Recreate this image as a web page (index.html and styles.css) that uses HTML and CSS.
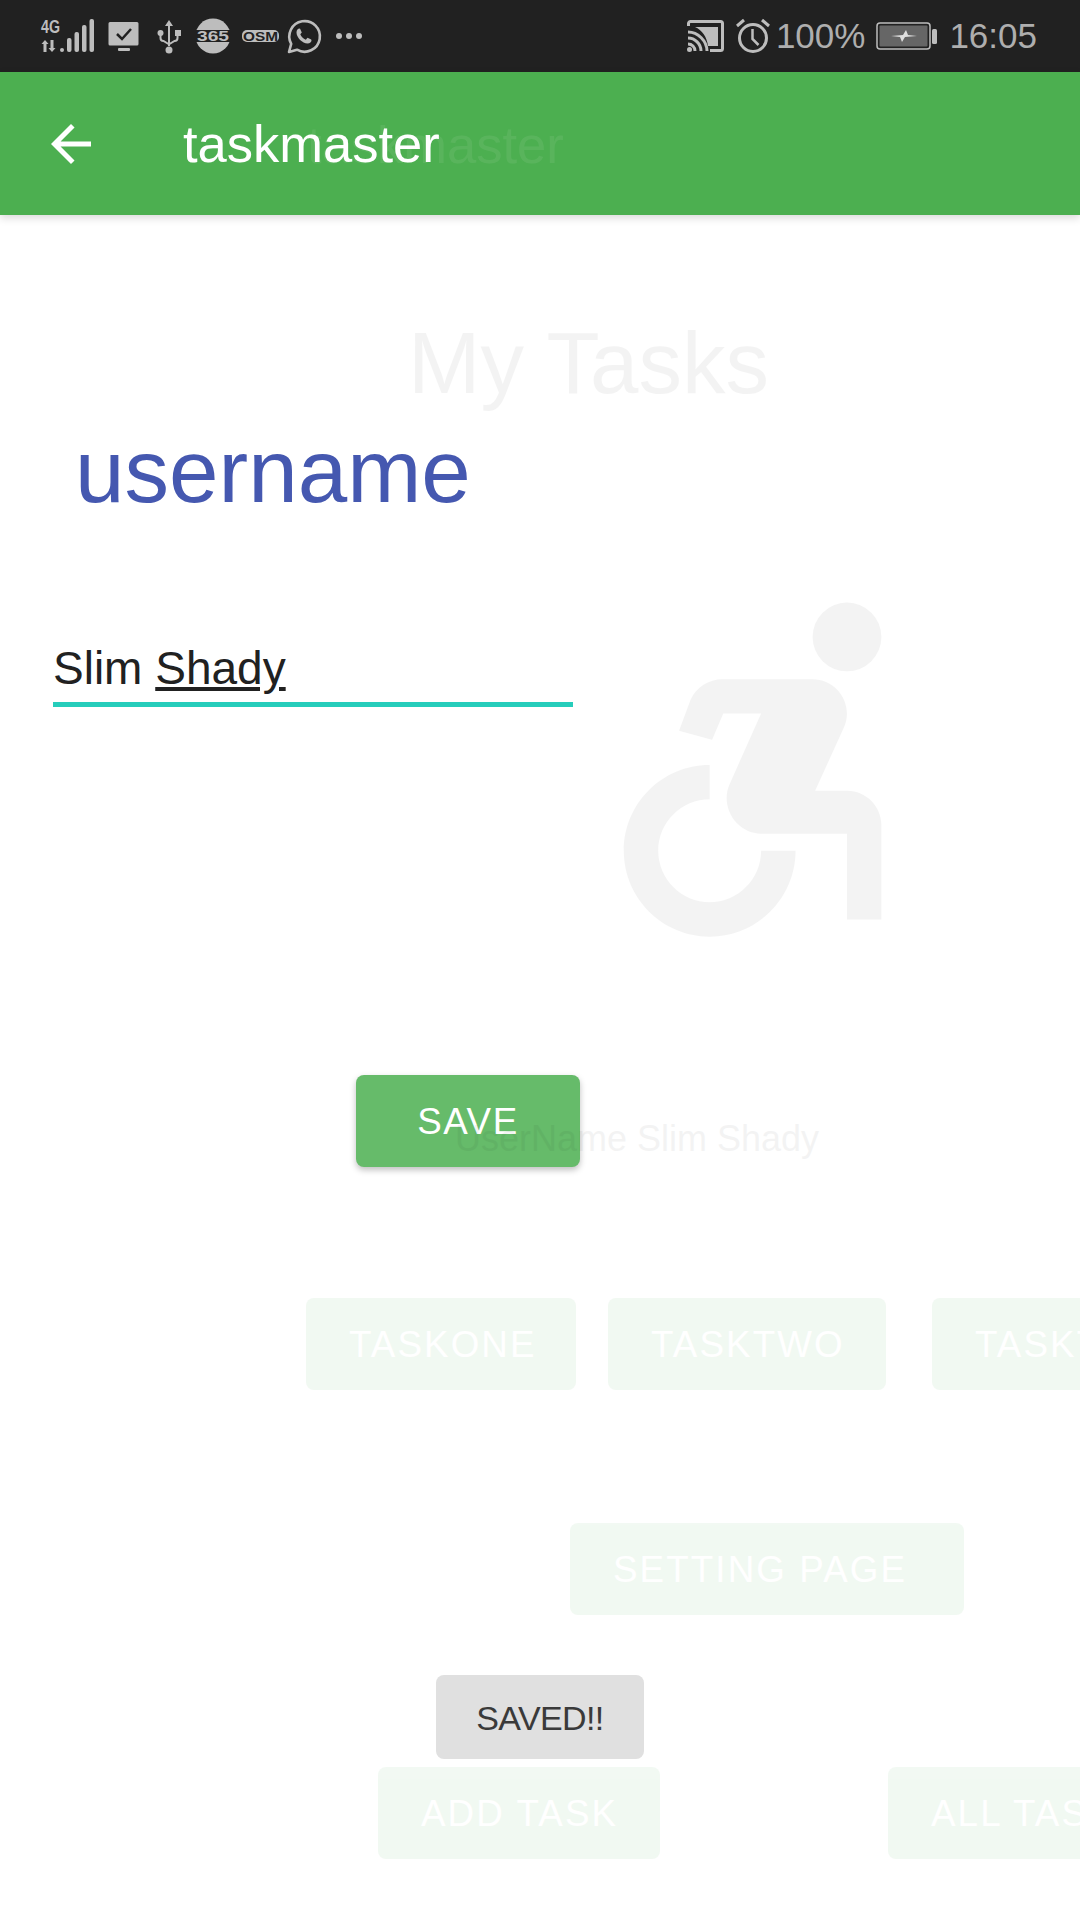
FILE: index.html
```html
<!DOCTYPE html>
<html>
	<head>
		<meta charset="UTF-8">
		<title>taskmaster</title>
		<link rel="stylesheet" href="styles.css">
	</head>
	<body>
		<div class="screen">
			<div class="status-bar">
				<div class="status-left">
					<svg class="ic-signal" width="54" height="36" viewBox="0 0 54 36">
						<text x="0" y="15" class="ic-text-4g" textLength="19" lengthAdjust="spacingAndGlyphs">4G</text>
						<path d="M4 22l3.500 4H5.500v8h-3v-8H.5zM11 34l-3.500-4h2v-8h3v8h2z"/>
						<rect x="19" y="30" width="4" height="4" rx="2"/>
						<rect x="26" y="20" width="4.500" height="14" rx="2"/>
						<rect x="33.500" y="14" width="4.500" height="20" rx="2"/>
						<rect x="41" y="7" width="4.500" height="27" rx="2"/>
						<rect x="48.500" y="1" width="4.500" height="33" rx="2"/>
					</svg>
					<svg class="ic-monitor" width="31" height="31" viewBox="0 0 31 31">
						<path d="M2 1h27a1.500 1.500 0 0 1 1.500 1.500V23a1.500 1.500 0 0 1-1.500 1.500H2A1.500 1.500 0 0 1 .5 23V2.500A1.500 1.500 0 0 1 2 1z"/>
						<path d="M9 13l5 5 9-10" fill="none" stroke="#212121" stroke-width="2.500"/>
						<rect x="10" y="27" width="12" height="3" rx="1"/>
					</svg>
					<svg class="ic-usb" width="24" height="35" viewBox="0 0 24 35">
						<path d="M12 1l4 6h-3v20h-2V7H8z"/>
						<circle cx="12" cy="31" r="3.500"/>
						<circle cx="3.500" cy="14" r="3"/>
						<rect x="18" y="11" width="6" height="6"/>
						<path d="M3.500 14v5c0 2 1 3 3 3l5 3M20.500 14v5c0 2-1 3-3 3l-5 3" fill="none" stroke="#bdbdbd" stroke-width="2"/>
					</svg>
					<svg class="ic-365" width="36" height="36" viewBox="0 0 36 36">
						<circle cx="18" cy="18" r="17.500"/>
						<rect x="0" y="12" width="36" height="12" fill="#212121"/>
						<text x="18" y="23" class="ic-text-365" textLength="32" lengthAdjust="spacingAndGlyphs">365</text>
					</svg>
					<svg class="ic-osm" width="37" height="14" viewBox="0 0 37 14">
						<rect x="0" y="1" width="37" height="12" rx="5"/>
						<text x="18.500" y="12" class="ic-text-osm" textLength="35" lengthAdjust="spacingAndGlyphs">OSM</text>
					</svg>
					<svg class="ic-whatsapp" width="34" height="35" viewBox="0 0 34 35">
						<path d="M2 33l2.200-8.200A15.300 15.300 0 1 1 10 30.700z" fill="none" stroke="#bdbdbd" stroke-width="2.600" stroke-linejoin="round"/>
						<path d="M12.500 9.500c-1.500 0-3 1.500-3 4 0 5 6 11 11 11 2.500 0 4-1.500 4-3l-.3-1-3.700-1.700-1.700 2c-2.500-1-4.600-3.200-5.500-5.500l1.500-1.800-1.700-3.800z"/>
					</svg>
					<div class="dots"><span></span><span></span><span></span></div>
				</div>
				<div class="status-right">
					<svg class="ic-cast" width="37" height="32" viewBox="0 0 37 32">
						<path d="M1.500 6V3.500a2 2 0 0 1 2-2h30a2 2 0 0 1 2 2v25a2 2 0 0 1-2 2H23" fill="none" stroke="#bdbdbd" stroke-width="3"/>
						<path d="M8 7h23v19H21C20 17 15 10 8 7z"/>
						<path d="M1 12c10 0 19 9 19 19M1 18c7 0 13 6 13 13M1 24c4 0 7 3 7 7" fill="none" stroke="#bdbdbd" stroke-width="3"/>
						<circle cx="2.500" cy="29.500" r="2.500"/>
					</svg>
					<svg class="ic-alarm" width="34" height="34" viewBox="0 0 34 34">
						<circle cx="17" cy="19" r="13.500" fill="none" stroke="#bdbdbd" stroke-width="3"/>
						<path d="M16.500 10v10l6 6" fill="none" stroke="#bdbdbd" stroke-width="2.500"/>
						<path d="M1 7l7-6M33 7l-7-6" fill="none" stroke="#bdbdbd" stroke-width="3"/>
					</svg>
					<span class="status-text">100%</span>
					<svg class="ic-battery" width="62" height="30" viewBox="0 0 62 30">
						<rect x="1" y="2" width="53" height="26" rx="3" fill="none" stroke="#bdbdbd" stroke-width="1.500"/>
						<rect x="3.500" y="4.500" width="48" height="21" rx="1" fill="#666"/>
						<path d="M15 15l12-1 3-5 2 5 9 1-12 1-3 5-2-5z" fill="#e0e0e0"/>
						<rect x="56" y="8" width="5" height="15" rx="1.500"/>
					</svg>
					<span class="status-text">16:05</span>
				</div>
			</div>

			<div class="app-bar">
				<svg class="back-icon" width="60" height="60" viewBox="0 0 24 24">
					<path d="M20 11H7.830l5.590-5.590L12 4l-8 8 8 8 1.410-1.410L7.830 13H20v-2z"/>
				</svg>
				<div class="app-title">taskmaster</div>
			</div>

			<div class="content">
				<div class="username-label">username</div>
				<div class="name-input"><span>Slim </span><u>Shady</u></div>
				<div class="save-row">
					<div class="btn save-btn">SAVE</div>
				</div>
			</div>

			<!-- toast -->
			<div class="toast">SAVED!!</div>

			<!-- previous page, still fading out above this one -->
			<div class="ghost">
				<div class="ghost-title">taskmaster</div>
				<div class="ghost-heading">My Tasks</div>
				<svg class="ghost-icon" width="412" height="412" viewBox="0 0 24 24">
					<circle cx="18" cy="4.540" r="2"/>
					<path d="M15 17h-2c0 1.650-1.350 3-3 3s-3-1.350-3-3 1.350-3 3-3v-2c-2.760 0-5 2.240-5 5s2.240 5 5 5 5-2.240 5-5zm3-3.500h-1.860l1.670-3.670C18.420 8.500 17.440 7 15.960 7h-5.200c-.810 0-1.540.470-1.870 1.200L8.220 10l1.920.530.650-1.530H13l-1.830 4.100c-.600 1.330.390 2.900 1.850 2.900H18v5h2v-5.500c0-1.100-.900-2-2-2z"/>
				</svg>
				<div class="ghost-name">UserName Slim Shady</div>
				<div class="ghost-row row-one">
					<div class="btn w-one">TASKONE</div>
					<div class="btn w-two">TASKTWO</div>
					<div class="btn">TASKTHREE</div>
				</div>
				<div class="ghost-row row-two">
					<div class="btn w-setting">SETTING PAGE</div>
				</div>
				<div class="ghost-row row-three">
					<div class="btn w-add">ADD TASK</div>
					<div class="btn">ALL TASKS</div>
				</div>
			</div>
		</div>
	</body>
</html>
```

FILE: styles.css
```css
* {margin: 0; padding: 0; box-sizing: border-box;}
body {
	background: #fff;
	font-family: "Liberation Sans", Arial, sans-serif;
}
.screen {
	width: 1080px;
	height: 1920px;
	position: relative;
	overflow: hidden;
	background: #fff;
}

/* status bar */
.status-bar {
	height: 72px;
	background: #212121;
	display: flex;
	justify-content: space-between;
	align-items: center;
	padding: 0 43px 0 41px;
}
.status-left, .status-right {
	display: flex;
	align-items: center;
}
.status-bar svg {
	fill: #bdbdbd;
	display: block;
	overflow: visible;
}
.ic-monitor {margin-left: 13px;}
.ic-usb {margin-left: 18px;}
.ic-365 {margin-left: 14px;}
.ic-osm {margin-left: 11px;}
.ic-whatsapp {margin-left: 8px;}
.ic-text-4g {font: bold 19px "Liberation Sans", sans-serif;}
.ic-text-365 {
	font: bold 15px "Liberation Sans", sans-serif;
	text-anchor: middle;
	fill: #bdbdbd;
}
.ic-text-osm {
	font: bold 13px "Liberation Sans", sans-serif;
	text-anchor: middle;
	fill: #212121;
}
.dots {
	display: flex;
	gap: 4px;
	margin-left: 15px;
}
.dots span {
	width: 6px;
	height: 6px;
	border-radius: 50%;
	background: #bdbdbd;
}
.ic-cast {margin-right: 1px;}
.ic-alarm {margin-left: 11px;}
.ic-battery {margin: 0 11px 0 11px;}
.status-text {
	font-size: 35px;
	color: #aeaeae;
	line-height: 40px;
}
.ic-alarm + .status-text {margin-left: 6px;}

/* app bar */
.app-bar {
	height: 143px;
	background: #4caf50;
	display: flex;
	align-items: center;
	padding-left: 41px;
	box-shadow: 0 3px 8px rgba(0, 0, 0, 0.15);
	position: relative;
}
.back-icon {fill: #fff;}
.app-title {
	font-size: 52.500px;
	color: #fff;
	margin-left: 82px;
}

/* content */
.content {
	padding-top: 206px;
}
.username-label {
	font-size: 89px;
	line-height: 100px;
	color: #4558b0;
	padding-left: 75px;
}
.name-input {
	width: 520px;
	margin: 104px 0 0 53px;
	height: 82px;
	padding-top: 10px;
	font-size: 46px;
	line-height: 66px;
	color: #212121;
	border-bottom: 5px solid #26cdbb;
}
.save-row {
	padding: 368px 0 0 356px;
}
.btn {
	height: 92px;
	line-height: 94px;
	padding: 0 43px;
	font-size: 36.750px;
	letter-spacing: 1.500px;
	color: #fff;
	background: #4caf50;
	border-radius: 8px;
	white-space: nowrap;
	flex-shrink: 0;
	box-shadow: 0 3px 6px rgba(0, 0, 0, 0.25);
}
.save-btn {
	width: 224px;
	padding: 0;
	text-align: center;
	background: #66bb6a;
}

/* toast */
.toast {
	position: absolute;
	left: 436px;
	top: 1675px;
	width: 208px;
	height: 84px;
	line-height: 86px;
	text-align: center;
	background: #e0e0e0;
	border-radius: 8px;
	font-size: 34px;
	letter-spacing: -0.600px;
	color: #3a3a3a;
}

/* ghost page */
.ghost {
	position: absolute;
	left: 0;
	top: 0;
	width: 1080px;
	height: 1920px;
	color: #000;
}
.ghost-title {
	position: absolute;
	left: 307px;
	top: 114px;
	font-size: 52.500px;
	color: #fff;
	opacity: 0.07;
}
.ghost-heading {
	position: absolute;
	left: 408px;
	top: 313px;
	font-size: 87px;
	opacity: 0.043;
}
.ghost-icon {
	position: absolute;
	left: 538px;
	top: 559px;
	opacity: 0.043;
}
.ghost-name {
	position: absolute;
	left: 455px;
	top: 1118px;
	font-size: 36px;
	opacity: 0.043;
}
.ghost-row {
	position: absolute;
	display: flex;
	opacity: 0.07;
}
.ghost-row .btn {
	box-shadow: none;
	letter-spacing: 2.100px;
}
.w-one {width: 270px;}
.w-two {width: 278px;}
.w-setting {width: 394px;}
.w-add {width: 282px;}
.row-one {left: 306px; top: 1298px; gap: 46px;}
.row-one .w-one {margin-right: -14px;}
.row-two {left: 570px; top: 1523px;}
.row-three {left: 378px; top: 1767px; gap: 228px;}
```
